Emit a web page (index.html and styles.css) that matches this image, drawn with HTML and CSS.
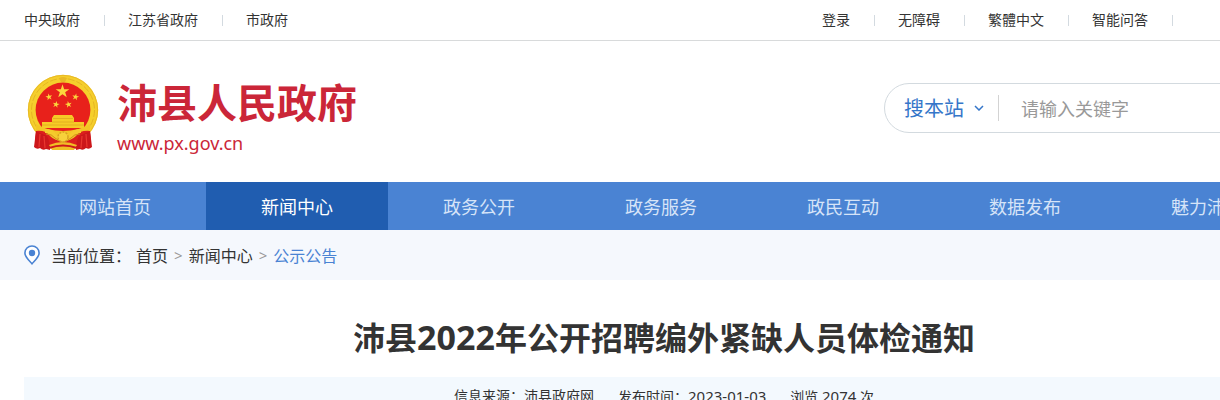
FILE: index.html
```html
<!DOCTYPE html>
<html lang="zh-CN">
<head>
<meta charset="utf-8">
<title>沛县2022年公开招聘编外紧缺人员体检通知</title>
<link rel="stylesheet" href="styles.css">
</head>
<body>
<div class="page">
  <div class="topbar">
    <div class="container topbar-inner">
      <ul class="links">
        <li><a href="#">中央政府</a></li>
        <li><a href="#">江苏省政府</a></li>
        <li><a href="#">市政府</a></li>
      </ul>
      <ul class="links links-tools">
        <li><a href="#">登录</a></li>
        <li><a href="#">无障碍</a></li>
        <li><a href="#">繁體中文</a></li>
        <li><a href="#">智能问答</a></li>
      </ul>
    </div>
  </div>

  <header class="container header">
    <a class="brand" href="#">
      <svg class="emblem" viewBox="0 0 72 78" aria-hidden="true">
        <defs>
          <path id="star" d="M0-10 2.3-3.1 9.5-3.1 3.7 1.2 5.9 8.1 0 3.8-5.9 8.1-3.7 1.2-9.5-3.1-2.3-3.1Z"/>
        </defs>
        <circle cx="36" cy="36" r="35.200" fill="#f5cf2c"/>
        <circle cx="36" cy="36" r="34.600" fill="none" stroke="#e9b926" stroke-width="1"/>
        <circle cx="36" cy="36" r="31.500" fill="none" stroke="#e6b524" stroke-width="1" stroke-dasharray="7 2"/>
        <path d="M32 4q4-2 8 0l-2 4h-4z" fill="#e9b826"/>
        <circle cx="36" cy="36" r="27.400" fill="#e8211b"/>
        <g fill="#fbd63c">
          <use href="#star" transform="translate(35.5 17.5) scale(.72)"/>
          <use href="#star" transform="translate(22 23) rotate(-12) scale(.36)"/>
          <use href="#star" transform="translate(48.5 23) rotate(12) scale(.36)"/>
          <use href="#star" transform="translate(29 30.5) rotate(12) scale(.36)"/>
          <use href="#star" transform="translate(41.5 30.5) rotate(-12) scale(.36)"/>
        </g>
        <path d="M27 41h18l2 3v4h10v6H15v-6h10v-4z" fill="#f6cb26"/>
        <path d="M26 44.500h20M25 48h22M15 51h42" stroke="#dfa820" stroke-width=".8"/>
        <path d="M9 50q11 7 27 7t27-7v12q-8 3-13 8-6 5-14 5t-14-5q-5-5-13-8z" fill="#f3c626"/>
        <path d="M9 57q10-1 14 5 5 5 13 5t13-5q4-6 14-5l1 9-12 8H20L8 66z" fill="#dc1f1d"/>
        <path d="M9 57l-2 16q3 3 6 1 3 3 6 1l4 1q0-9-3-14z" fill="#cc171b"/>
        <path d="M63 57l2 16q-3 3-6 1-3 3-6 1l-4 1q0-9 3-14z" fill="#cc171b"/>
        <path d="M13 60l-1 13M17 62l1 12M59 60l1 13M55 62l-1 12" stroke="#e93730" stroke-width="1.200"/>
        <path d="M18 57q7 0 10 5 3 3 8 3t8-3q3-5 10-5" fill="none" stroke="#f5cb2c" stroke-width="4"/>
        <path d="M19 60q6 0 9 4 3 3 8 3t8-3q3-4 9-4" fill="none" stroke="#cf8e1c" stroke-width="1"/>
        <path d="M22 71q7-3 14-3t14 3l-3 5H25z" fill="#f0be25"/>
        <circle cx="36" cy="63" r="5" fill="#f7d13b" stroke="#d89f20" stroke-width="1.400" stroke-dasharray="2 1.200"/>
        <path d="M22 74q14-5 28 0" fill="none" stroke="#cd1a1c" stroke-width="2"/>
      </svg>
      <span class="brand-text">
        <span class="brand-name">沛县人民政府</span>
        <span class="brand-url">www.px.gov.cn</span>
      </span>
    </a>
    <form class="search">
      <span class="scope">
        <select class="scope-select" aria-label="搜索范围"><option>搜本站</option></select>
        <svg class="chevron" viewBox="0 0 10 6" aria-hidden="true"><path d="M1 1l4 4 4-4"/></svg>
      </span>
      <input class="keyword" type="text" placeholder="请输入关键字" aria-label="关键字">
    </form>
  </header>

  <nav class="nav">
    <ul class="container nav-list">
      <li><a href="#">网站首页</a></li>
      <li><a class="active" href="#">新闻中心</a></li>
      <li><a href="#">政务公开</a></li>
      <li><a href="#">政务服务</a></li>
      <li><a href="#">政民互动</a></li>
      <li><a href="#">数据发布</a></li>
      <li><a href="#">魅力沛县</a></li>
    </ul>
  </nav>

  <div class="crumb-bar">
    <div class="container crumbs">
      <svg class="pin" viewBox="0 0 16 20" aria-hidden="true">
        <path d="M8 1C4 1 .9 4 .9 7.900c0 4.200 4.600 7.800 7.100 10.900 2.500-3.100 7.100-6.700 7.100-10.900C15.100 4 12 1 8 1z"/>
        <circle cx="8" cy="8" r="3.200"/>
      </svg>
      <span class="crumb-label">当前位置：</span>
      <a href="#">首页</a><span class="sep">&gt;</span><a href="#">新闻中心</a><span class="sep">&gt;</span><a class="current" href="#">公示公告</a>
    </div>
  </div>

  <main class="container article">
    <h1 class="title">沛县<span class="title-year">2022</span>年公开招聘编外紧缺人员体检通知</h1>
    <div class="meta">
      <span>信息来源：沛县政府网</span>
      <span>发布时间：<span class="num">2023-01-03</span></span>
      <span>浏览 <span class="num">2074</span> 次</span>
    </div>
  </main>
</div>
</body>
</html>
```
FILE: styles.css
```css
* { box-sizing: border-box; }

body {
  margin: 0;
  overflow: hidden;
  background: #fff;
  color: #333;
  font-family: "Noto Sans", "Noto Sans CJK SC", sans-serif;
  font-size: 14px;
}

a { color: inherit; text-decoration: none; }
ul { margin: 0; padding: 0; list-style: none; }

.page { min-width: 1328px; }
.container { max-width: 1280px; margin: 0 auto; }

.topbar { border-bottom: 1px solid #d8dadb; }
.topbar-inner {
  display: flex;
  align-items: center;
  justify-content: space-between;
  height: 40px;
}
.links { display: flex; line-height: 20px; }
.links li { display: flex; align-items: center; }
.links li + li { padding-left: 23px; }
.links li::after {
  content: "";
  width: 1px;
  height: 11px;
  margin-left: 24px;
  background: #d3dae0;
}
.links li:last-child::after { background: transparent; }
.links-tools { padding-right: 131px; }
.links-tools li:last-child::after { background: #d3dae0; }

.header {
  display: flex;
  align-items: center;
  justify-content: space-between;
  height: 141px;
}
.brand { display: flex; align-items: center; padding: 2px 0 0 3px; color: #cb2638; }
.emblem { width: 72px; height: 78px; margin-right: 18px; }
.brand-text { display: flex; flex-direction: column; padding-top: 4px; }
.brand-name { font-size: 40px; font-weight: 700; line-height: 56px; }
.brand-url { font-size: 18px; line-height: 24px; }

.search {
  display: flex;
  align-items: center;
  width: 420px;
  height: 50px;
  margin-bottom: 8px;
  padding-left: 19px;
  border: 1px solid #d3dadf;
  border-radius: 25px;
}
.scope {
  display: flex;
  align-items: center;
  height: 26px;
  padding-right: 14px;
  border-right: 1px solid #d3d3d3;
}
.scope-select {
  width: 70px;
  padding: 2px 0 0;
  border: 0;
  appearance: none;
  background: transparent;
  color: #3576c9;
  font: inherit;
  font-size: 20px;
  line-height: 30px;
}
.chevron { width: 10px; height: 6px; fill: none; stroke: #3576c9; stroke-width: 1.500; }
.keyword {
  flex: 1;
  min-width: 0;
  margin: 0 24px 0 22px;
  padding: 2px 0 0;
  border: 0;
  outline: 0;
  background: transparent;
  font: inherit;
  font-size: 18px;
}
.keyword::placeholder { color: #999; }

.nav { background: #4a83d3; }
.nav-list { display: flex; }
.nav-list a {
  display: block;
  width: 182px;
  padding-top: 2px;
  color: #d6e4f8;
  font-size: 18px;
  line-height: 46px;
  text-align: center;
}
.nav-list .active { background: #205db0; color: #fff; }

.crumb-bar { background: #f5f8fd; }
.crumbs { display: flex; align-items: center; height: 50px; font-size: 16px; }
.pin { width: 16px; height: 20px; margin-right: 11px; }
.pin path { fill: #fff; stroke: #4a83d3; stroke-width: 1.600; }
.pin circle { fill: #4a83d3; }
.crumb-label { margin-right: 5px; }
.sep { padding: 0 6px; color: #999; font-size: 15px; }
.current { color: #4a83d3; }

.article { padding-top: 33px; }
.title { margin: 0; font-size: 32px; line-height: 48px; text-align: center; }
.title-year { font-size: 34px; }
.meta {
  display: flex;
  justify-content: center;
  gap: 24px;
  margin-top: 15px;
  background: #f3f9fe;
  line-height: 38px;
}
.num { font-size: 15px; }
```
